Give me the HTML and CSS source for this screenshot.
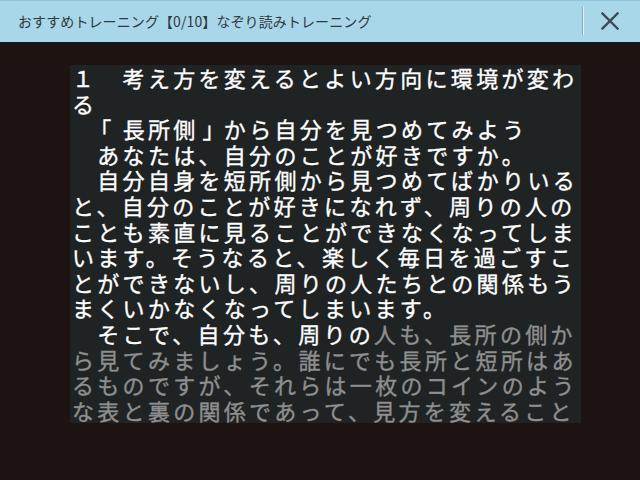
FILE: index.html
```html
<!DOCTYPE html>
<html lang="ja">
<head>
<meta charset="utf-8">
<link rel="stylesheet" href="styles.css">
</head>
<body>
<div class="app">
  <header class="bar">
    <div class="title">おすすめトレーニング【0/10】なぞり読みトレーニング</div>
    <div class="divider"></div>
    <button class="close" aria-label="閉じる">
      <svg width="18" height="18" viewBox="0 0 18 18"><path d="M1.5 1.5 L16.5 16.5 M16.5 1.5 L1.5 16.5" stroke="#3c4a52" stroke-width="2.4" stroke-linecap="square" fill="none"/></svg>
    </button>
  </header>
  <main class="stage">
    <div class="reader">
      <p class="line">１　考え方を変えるとよい方向に環境が変わる</p>
      <p class="line">　<span class="ob">「</span>長所側<span class="cb">」</span>から自分を見つめてみよう</p>
      <p class="line">　あなたは、自分のことが好きですか。</p>
      <p class="line">　自分自身を短所側から見つめてばかりいると、自分のことが好きになれず、周りの人のことも素直に見ることができなくなってしまいます。そうなると、楽しく毎日を過ごすことができないし、周りの人たちとの関係もうまくいかなくなってしまいます。</p>
      <p class="line">　そこで、自分も、周りの<span class="dim">人も、長所の側から見てみましょう。誰にでも長所と短所はあるものですが、それらは一枚のコインのような表と裏の関係であって、見方を変えることで、短所も長所に見えてきます。</span></p>
    </div>
  </main>
</div>
</body>
</html>
```

FILE: styles.css
```css
html, body {
  margin: 0;
  padding: 0;
  width: 640px;
  height: 480px;
  overflow: hidden;
  background: #1e1313;
}
.app {
  display: flex;
  flex-direction: column;
  width: 640px;
  height: 480px;
}
.bar {
  height: 44px;
  flex: 0 0 44px;
  box-sizing: border-box;
  border-top: 1px solid #8fc3da;
  border-bottom: 2px solid #16181a;
  background: #a9d7ea;
  display: flex;
  align-items: center;
  padding-left: 18px;
}
.title {
  flex: 1;
  font-family: "Noto Sans CJK JP", "Noto Sans", sans-serif;
  font-size: 14px;
  letter-spacing: 0.1px;
  color: #30383c;
  padding-bottom: 1px;
  text-spacing-trim: space-all;
}
.divider {
  width: 1px;
  height: 28px;
  background: #8aa9b6;
  box-shadow: 1px 0 0 #e4f3f9;
  margin-right: 18px;
  margin-bottom: 2px;
}
.close {
  width: 18px;
  height: 18px;
  padding: 0;
  border: 0;
  background: none;
  margin-right: 21px;
  margin-bottom: 2px;
  display: flex;
}
.stage {
  flex: 1;
  padding-top: 21px;
  padding-left: 70px;
}
.reader {
  width: 511px;
  height: 358px;
  box-sizing: border-box;
  padding-left: 2px;
  background: #1f2324;
  overflow: hidden;
  font-family: "Noto Sans CJK JP", sans-serif;
  font-size: 22px;
  letter-spacing: 3.3px;
  line-height: 25.6px;
  color: #ffffff;
  -webkit-text-stroke: 0.35px currentColor;
  text-spacing-trim: space-all;
}
.line {
  margin: 0;
}
.ob {
  margin-left: -8px;
  margin-right: 8px;
}
.cb {
  margin-left: 4px;
  margin-right: -4px;
}
.dim {
  color: #8f8f8f;
}
```
